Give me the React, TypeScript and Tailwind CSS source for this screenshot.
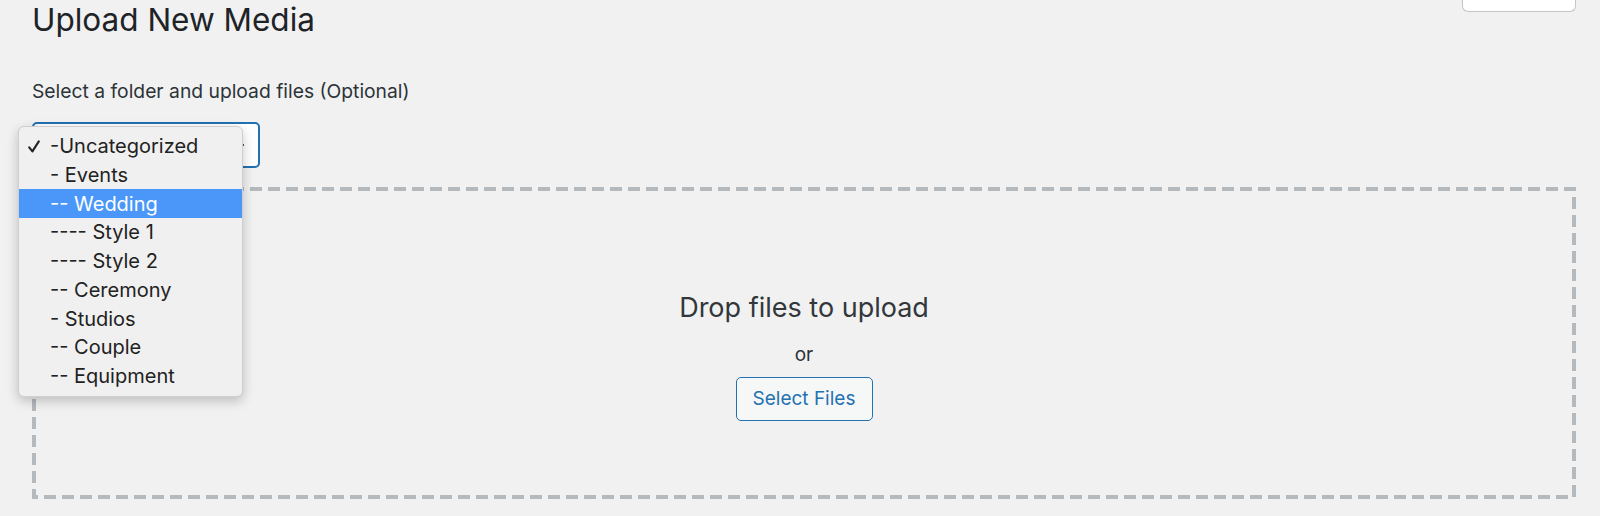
import { useState } from "react";

const folders = [
	"-Uncategorized",
	"- Events",
	"-- Wedding",
	"---- Style 1",
	"---- Style 2",
	"-- Ceremony",
	"- Studios",
	"-- Couple",
	"-- Equipment",
];

const App = () => {
	const [selected] = useState<number>(0);
	const [hovered, setHovered] = useState<number>(2);

	return (
		<div className="min-h-[516px] bg-[#f1f1f1] text-[#1d2327] font-['Inter','Liberation_Sans',sans-serif] pl-[32px] pr-[24px] overflow-hidden">
			<div className="flex justify-between items-start">
				<h1 className="text-[31.5px] leading-none font-normal pt-[4px]">Upload New Media</h1>
				<div className="w-[114px] h-[12px] bg-white border border-t-0 border-[#c3c4c7] rounded-b-[6px]" />
			</div>

			<p className="mt-[46px] text-[19.3px] leading-none text-[#2c3338]">Select a folder and upload files (Optional)</p>

			<div className="relative mt-[21px]">
				<div className="w-[228px] h-[46px] bg-white border-2 border-[#2271b1] rounded-[5px] flex items-center justify-end pr-[14px]">
					<span className="w-[4px] h-[2px] bg-[#50575e]" />
				</div>

				<ul className="absolute left-[-14px] top-[4px] w-[225px] py-[5px] bg-[#f0f0f0] border border-[#cfcfcf] rounded-[6px] shadow-[0_4px_12px_rgba(0,0,0,0.22)] z-10">
					{folders.map((name, i) => (
						<li
							key={name}
							onMouseEnter={() => setHovered(i)}
							className={`h-[28.75px] flex items-center text-[20px] whitespace-pre ${
								i === hovered ? "bg-[#4b97f9] text-white" : "text-[#222222]"
							}`}>
							<span className="w-[31px] pl-[9px] flex items-center">
								{i === selected && (
									<svg width="12" height="13" viewBox="0 0 12 13" fill="none">
										<path d="M1.2 7.4 L4.4 11.4 L10.8 1.4" stroke="#222222" strokeWidth="2.1" strokeLinecap="round" strokeLinejoin="round" />
									</svg>
								)}
							</span>
							{name}
						</li>
					))}
				</ul>
			</div>

			<div className="relative mt-[19px] h-[312px] flex flex-col items-center pt-[107px]">
				<svg className="absolute inset-0 w-full h-full" preserveAspectRatio="none">
					<rect x="2" y="2" width="calc(100% - 4px)" height="calc(100% - 4px)" fill="none" stroke="#b4b9be" strokeWidth="4" strokeDasharray="12 6" />
				</svg>
				<p className="text-[27px] leading-none text-[#32373c]">Drop files to upload</p>
				<p className="mt-[24px] text-[19px] leading-none text-[#2c3338]">or</p>
				<button className="mt-[13px] w-[137px] h-[44px] border border-[#2271b1] rounded-[5px] bg-[#f6f7f7] text-[#2271b1] text-[19px]">
					Select Files
				</button>
			</div>
		</div>
	);
};

export default App;
